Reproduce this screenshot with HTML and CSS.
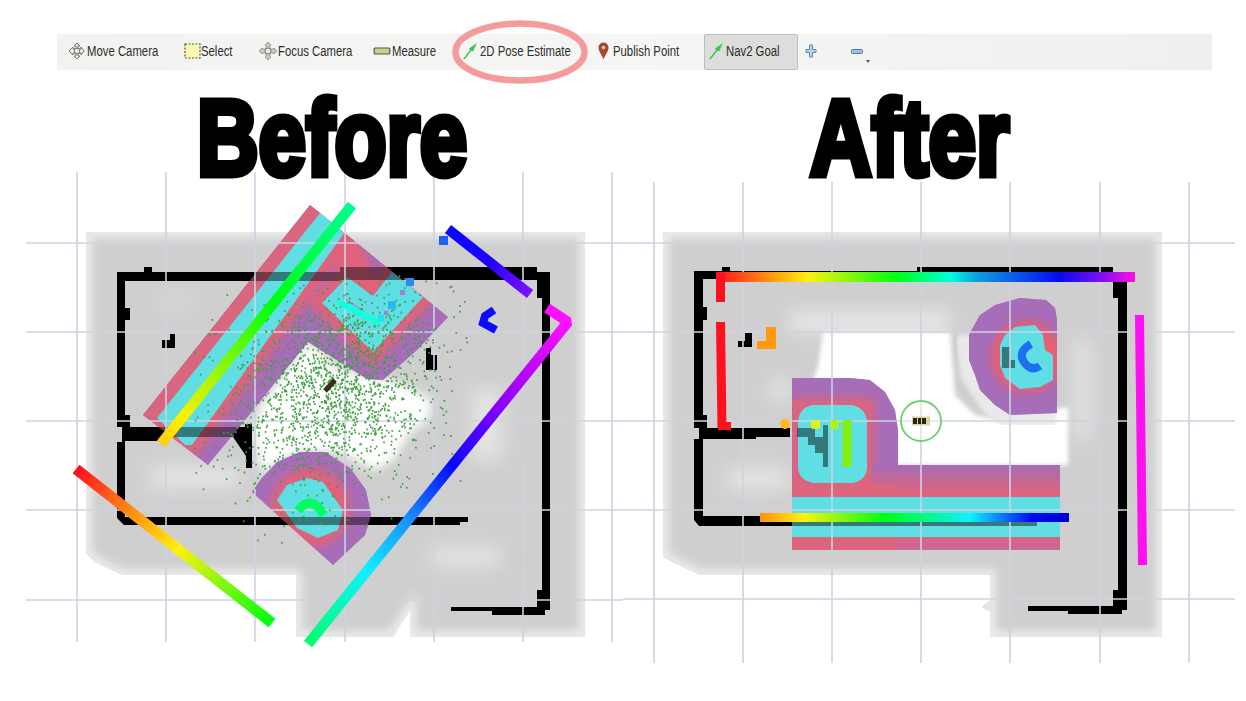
FILE: index.html
```html
<!DOCTYPE html>
<html lang="en">
<head>
<meta charset="utf-8">
<title>2D Pose Estimate: before and after</title>
<link rel="stylesheet" href="styles.css">
</head>
<body>
<main class="page">
  <nav class="toolbar">
    <div class="tool tool-move">
      <svg class="ico" viewBox="0 0 18 18"><path d="M9 1l3 3h-2v3h3V5l3 4-3 4v-2h-3v3h2l-3 3-3-3h2v-3H5v2L1 9l4-4v2h3V4H6z" fill="#e9e9e6" stroke="#77776f" stroke-width="1"/><rect x="6.500" y="6.500" width="5" height="5" fill="none" stroke="#88887f" stroke-width="1"/></svg>
      <span>Move Camera</span>
    </div>
    <div class="tool tool-select">
      <svg class="ico" viewBox="0 0 17 18"><rect x="1" y="2" width="15" height="14" fill="#fbf8b4" stroke="#55553a" stroke-width="1.200" stroke-dasharray="2 1.500"/></svg>
      <span>Select</span>
    </div>
    <div class="tool tool-focus">
      <svg class="ico" viewBox="0 0 18 18"><path d="M9 0l3 3-1 1v3h3l1-1 3 3-3 3-1-1h-3v3l1 1-3 3-3-3 1-1v-3H4l-1 1-3-3 3-3 1 1h3V4L6 3z" fill="#c4c6bf" stroke="#8d8f87" stroke-width=".8"/><circle cx="9" cy="9" r="3" fill="#e8e8e4" stroke="#7c7e76"/></svg>
      <span>Focus Camera</span>
    </div>
    <div class="tool tool-measure">
      <svg class="ico ico-wide" viewBox="0 0 17 8"><rect x=".7" y="1" width="15.600" height="6" rx="1" fill="#c8cf93" stroke="#55584a" stroke-width="1.200"/></svg>
      <span>Measure</span>
    </div>
    <div class="tool tool-pose">
      <svg class="ico" viewBox="0 0 16 18"><path d="M1 17L8 8 7 6.500 15 1l-4 8.500L9.500 8.500 3 17z" fill="#38c94a"/></svg>
      <span>2D Pose Estimate</span>
    </div>
    <div class="tool tool-point">
      <svg class="ico ico-pin" viewBox="0 0 11 18"><path d="M5.500 17.500C4 13 .5 9.500.5 5.500a5 5 0 0 1 10 0c0 4-3.500 7.500-5 12z" fill="#a24a2c"/><circle cx="5.500" cy="5.500" r="1.800" fill="#ecc7b0"/></svg>
      <span>Publish Point</span>
    </div>
    <div class="tool tool-nav">
      <svg class="ico" viewBox="0 0 16 18"><path d="M1 17L8 8 7 6.500 15 1l-4 8.500L9.500 8.500 3 17z" fill="#38c94a"/></svg>
      <span>Nav2 Goal</span>
    </div>
    <svg class="ico-plus" viewBox="0 0 12 14"><path d="M4.500 1h3v4.500H11v3H7.500V13h-3V8.500H1v-3h3.500z" fill="#b7d3ec" stroke="#5f87b4" stroke-width="1"/></svg>
    <div class="minus-wrap">
      <svg class="ico-minus" viewBox="0 0 12 5"><rect x=".5" y=".5" width="11" height="4" rx="1" fill="#9fc0e0" stroke="#4f78a8"/></svg>
      <span class="caret"></span>
    </div>
    <svg class="ring" viewBox="0 0 140 70"><ellipse cx="70" cy="35" rx="64.500" ry="28.500" fill="none" stroke="#f49c9c" stroke-width="6.500"/></svg>
  </nav>

  <header class="titles">
    <h1 class="title title-before">Before</h1>
    <h1 class="title title-after">After</h1>
  </header>

  <section class="maps">
    <svg class="map" viewBox="0 172 623 529" aria-label="Before map">
      <defs>
        <filter id="b2"><feGaussianBlur stdDeviation="2"/></filter>
        <filter id="b5" x="-20%" y="-20%" width="140%" height="140%"><feGaussianBlur stdDeviation="5"/></filter>
        <filter id="b9" x="-30%" y="-30%" width="160%" height="160%"><feGaussianBlur stdDeviation="9"/></filter>
        <clipPath id="lgray"><path d="M86 232H585V637H410V610L393 637H296V575H122L95 562 86 553z"/></clipPath>
        <clipPath id="lz1"><path d="M310 205L448 317 433 333 417 350 383 380 367 379 308 342 245 420 208 465 143 415z"/></clipPath>
        <clipPath id="lz2"><path d="M252 492L262 478 277 462 300 452 325 452 350 468 366 490 371 515 365 535 333 565z"/></clipPath>
        <linearGradient id="la" gradientUnits="userSpaceOnUse" x1="352" y1="207" x2="163" y2="442"><stop offset="0" stop-color="#00ff90"/><stop offset=".42" stop-color="#00ff10"/><stop offset=".9" stop-color="#fff000"/><stop offset="1" stop-color="#ffd010"/></linearGradient>
        <linearGradient id="lb" gradientUnits="userSpaceOnUse" x1="450" y1="231" x2="528" y2="293"><stop offset="0" stop-color="#0808ff"/><stop offset=".5" stop-color="#2000ff"/><stop offset="1" stop-color="#7a10ff"/></linearGradient>
        <linearGradient id="lc" gradientUnits="userSpaceOnUse" x1="570" y1="323" x2="310" y2="642"><stop offset="0" stop-color="#ff10ff"/><stop offset=".28" stop-color="#8000ff"/><stop offset=".45" stop-color="#0808ff"/><stop offset=".62" stop-color="#1a90ff"/><stop offset=".78" stop-color="#10f0ff"/><stop offset="1" stop-color="#00ff70"/></linearGradient>
        <linearGradient id="ld" gradientUnits="userSpaceOnUse" x1="78" y1="470" x2="270" y2="622"><stop offset="0" stop-color="#ff1020"/><stop offset=".28" stop-color="#ff9010"/><stop offset=".52" stop-color="#fff010"/><stop offset="1" stop-color="#00ff10"/></linearGradient>
        <g id="lzones">
          <g clip-path="url(#lz1)">
            <rect x="130" y="200" width="330" height="280" fill="#a66db8"/>
            <g filter="url(#b5)"><path d="M320 213L345 232 347 277 322 303 373 352 423 297 392 272 373 296 345 232 192 445 185 445 157 418z" fill="#e0647a" stroke="#e0647a" stroke-width="20"/></g>
            <path d="M310 205L320 213 157 418 143 415z" fill="#d9677e"/>
            <path d="M320 213L345 232 192 445 185 445 157 418z" fill="#5fdfe3"/>
          </g>
          <path d="M347 277L373 296 392 272 423 297 373 352 322 303z" fill="#5fdfe3"/>
          <path d="M343 297L378 322" stroke="#a78cd0" stroke-width="1.500"/>
          <g clip-path="url(#lz2)">
            <rect x="245" y="445" width="130" height="125" fill="#a66db8"/>
            <g filter="url(#b5)"><circle cx="310" cy="508" r="40" fill="#e0647a"/></g>
          </g>
          <path d="M277 500L287 485 307 478 323 482 343 510 338 530 318 538 297 528z" fill="#5fdfe3"/>
        </g>
      </defs>

      <g clip-path="url(#lgray)">
        <rect x="80" y="225" width="510" height="420" fill="#cfcfcf"/>
        <g filter="url(#b5)">
          <path d="M86 232H585V637H410V610L393 637H296V575H122L95 562 86 553z" fill="none" stroke="#eeeeee" stroke-width="11"/>
        </g>
        <g filter="url(#b9)" fill="#e4e4e4">
          <rect x="150" y="466" width="90" height="22"/>
          <rect x="430" y="548" width="70" height="18"/>
          <rect x="472" y="390" width="30" height="70"/>
          <rect x="160" y="298" width="30" height="6"/>
        </g>
      </g>
      <g filter="url(#b5)"><path d="M308 342L338 370 395 382 432 400 428 420 410 432 393 460 375 470 340 452 300 450 262 472 252 430 262 405z" fill="#fff"/></g>

      <use href="#lzones"/>
      <path fill="#000" d="M117 272H340V267H537V272H550V610H545V615H492V611H451V607H537V590H542V298H537V280H340V281H125V308H130V320H125V415H130V427H245V424H252V468H246V456L233 437H160V441H125V517H468V522H460V525H124L117 518V442H122V427H117zM144 267H152V272H144z"/>
      <path fill="#000" d="M162 340H170V334H175V348H162zM426 348H431V355H437V370H426z"/>
      <use href="#lzones" opacity=".55"/>

      <g class="grid">
        <path d="M77 172V642M166 172V642M255 172V642M345 172V642M434 172V642M523 172V642M612 172V642M26 243H623M26 332H623M26 421H623M26 510H623M26 600H623"/>
      </g>

      <g id="particles"></g>

      <path d="M298 511Q310 493 324 515" fill="none" stroke="#00ff60" stroke-width="9"/>
      <path d="M338 302L380 323" stroke="#10ffdc" stroke-width="6"/>
      <rect x="406" y="278" width="8" height="8" fill="#2a8cf0"/>
      <rect x="388" y="301" width="8" height="8" fill="#2bb8f0"/>
      <rect x="378" y="315" width="6" height="6" fill="#20e0f0"/>
      <rect x="400" y="290" width="5" height="5" fill="#a77fd0"/>
      <rect x="384" y="311" width="4" height="4" fill="#a77fd0"/>
      <rect x="439" y="236" width="9" height="9" fill="#2060f0"/>

      <path d="M352 205L161 444" stroke="url(#la)" stroke-width="10.500"/>
      <path d="M448 229L530 294" stroke="url(#lb)" stroke-width="10"/>
      <path d="M547 308L568 322 308 644" fill="none" stroke="url(#lc)" stroke-width="10.500" stroke-linejoin="bevel"/>
      <path d="M76 469L272 623" stroke="url(#ld)" stroke-width="11"/>
      <path d="M494 310L485 316 483 323 496 330" fill="none" stroke="#0a0aff" stroke-width="8"/>
      <path d="M325 391L335 380" stroke="#3a2e1a" stroke-width="5"/>
    </svg>

    <svg class="map" viewBox="623 172 623 529" aria-label="After map">
      <defs>
        <clipPath id="rgray"><path d="M663 232H1162V637H990V612L982 607 990 600V575H700L672 562 663 557z"/></clipPath>
        <clipPath id="rz1"><path d="M792 378H850L870 380 885 392 895 410 898 430V465H1060V550H792z"/></clipPath>
        <clipPath id="rz2"><path d="M1020 298L1046 300 1055 308 1057 320V413L1010 415 995 405 980 390 975 375 969 360V335L980 315 995 305z"/></clipPath>
        <linearGradient id="ra" gradientUnits="userSpaceOnUse" x1="716" y1="0" x2="1135" y2="0"><stop offset="0" stop-color="#ff1020"/><stop offset=".12" stop-color="#ff8c10"/><stop offset=".22" stop-color="#fff010"/><stop offset=".43" stop-color="#00ff10"/><stop offset=".56" stop-color="#00ffe0"/><stop offset=".62" stop-color="#10a0e0"/><stop offset=".82" stop-color="#0808f0"/><stop offset=".92" stop-color="#8010f0"/><stop offset="1" stop-color="#ff10e0"/></linearGradient>
        <linearGradient id="rb" gradientUnits="userSpaceOnUse" x1="760" y1="0" x2="1069" y2="0"><stop offset="0" stop-color="#ff9010"/><stop offset=".14" stop-color="#fff010"/><stop offset=".4" stop-color="#00ff10"/><stop offset=".68" stop-color="#10f0ff"/><stop offset=".88" stop-color="#0808f0"/><stop offset="1" stop-color="#0000d0"/></linearGradient>
        <linearGradient id="rc" gradientUnits="userSpaceOnUse" x1="0" y1="465" x2="0" y2="550"><stop offset="0" stop-color="#a66db8"/><stop offset=".32" stop-color="#dc647c"/><stop offset=".8" stop-color="#dc647c"/><stop offset="1" stop-color="#c9689a"/></linearGradient>
        <g id="rzones">
          <g clip-path="url(#rz1)">
            <rect x="790" y="375" width="275" height="180" fill="#a66db8"/>
            <g filter="url(#b5)" fill="#e0647a" stroke="#e0647a" stroke-width="14">
              <path d="M797 405H867V483H797z"/>
            </g>
            <rect x="872" y="465" width="188" height="85" fill="url(#rc)"/>
            <rect x="792" y="484" width="106" height="66" fill="#dc647c"/>
          </g>
          <path d="M792 497H1060V537H792z" fill="#5fdfe3"/>
          <path d="M812 405H852Q866 408 867 422V468Q866 480 853 483H813Q799 480 798 468V422Q799 408 812 405z" fill="#5fdfe3"/>
          <g clip-path="url(#rz2)">
            <rect x="960" y="290" width="105" height="130" fill="#a66db8"/>
            <g filter="url(#b5)"><circle cx="1027" cy="357" r="36" fill="#e85f72"/></g>
          </g>
          <path d="M1015 327L1035 325 1043 335 1045 350 1053 355V380L1040 387 1020 389 1005 378 1000 365V345L1005 335z" fill="#5fdfe3"/>
        </g>
      </defs>

      <g clip-path="url(#rgray)">
        <rect x="655" y="225" width="515" height="420" fill="#cfcfcf"/>
        <g filter="url(#b5)">
          <path d="M663 232H1162V637H990V575H700L672 562 663 557z" fill="none" stroke="#eeeeee" stroke-width="11"/>
        </g>
        <g filter="url(#b9)" fill="#e4e4e4">
          <rect x="728" y="468" width="60" height="22"/>
          <rect x="770" y="380" width="20" height="20"/>
          <rect x="1075" y="340" width="15" height="100"/>
          <rect x="790" y="312" width="160" height="20" fill="#e8e8e8"/>
        </g>
      </g>
      <g filter="url(#b2)"><path d="M823 332H950L955 395 975 415 1000 420 1068 407V465H840V380H813L818 367z" fill="#fff"/></g>
      <path d="M966 335L972 375 992 405 1007 416H1056" fill="none" stroke="#e9e9e9" stroke-width="22" filter="url(#b2)"/>
      <use href="#rzones"/>
      <path fill="#000" d="M694 271H722V267H730V271H917V267H1113V278H1127V610H1122V614H1068V611H1028V606H1113V590H1118V298H1113V279H703V307H707V320H703V415H707V428H790V437H756V439H703V516H792V517H1037V526H699L694 520V439H699V428H694zM738 347V341H745V333H752V347z"/>
      <path fill="#000" d="M797 428H815V437H823V425H828V467H823V453H815V445H808V437H797zM1002 347H1010V360H1015V368H1002z"/>
      <use href="#rzones" opacity=".55"/>

      <g class="grid">
        <path d="M654 182V663M743 182V663M832 182V663M921 182V663M1010 182V663M1100 182V663M1189 182V663M623 243H1235M623 332H1235M623 421H1235M623 510H1235M623 599H1235"/>
      </g>

      <path d="M716 277H1135" stroke="url(#ra)" stroke-width="10"/>
      <path d="M720.500 273V302M720.500 322L722 428" stroke="#ff1020" stroke-width="9"/>
      <rect x="718" y="422" width="13" height="8" fill="#ff1020"/>
      <path d="M1139.500 315L1142.500 565" stroke="#ff10f0" stroke-width="9"/>
      <path d="M760 517.500H1069" stroke="url(#rb)" stroke-width="9"/>
      <path d="M757 341H766V327H776V349H757z" fill="#ff9a10"/>
      <circle cx="785" cy="424" r="5" fill="#ffb820"/>
      <rect x="811" y="420" width="9" height="9" rx="2" fill="#e4ee20"/>
      <rect x="830" y="420" width="9" height="9" rx="2" fill="#b0f020"/>
      <path d="M847 420V467" stroke="#80f010" stroke-width="9"/>
      <path d="M1031 344Q1017 352 1024 362T1040 366" fill="none" stroke="#1e6ef0" stroke-width="8"/>

      <circle cx="921" cy="421" r="20" fill="#fff" fill-opacity=".4" stroke="#70cf70" stroke-width="1.800"/>
      <path d="M912 421H930" stroke="#c8b860" stroke-width="9" opacity=".6"/>
      <path d="M913 421H929" stroke="#26241a" stroke-width="6" stroke-dasharray="4 1 3 1 4"/>
    </svg>
  </section>
</main>
<script src="app.js"></script>
</body>
</html>
```

FILE: styles.css
```css
* { box-sizing: border-box; }
html, body { margin: 0; background: #fff; }
.page {
  width: 1246px;
  height: 701px;
  overflow: hidden;
  display: flex;
  flex-direction: column;
  padding-top: 34px;
}
.toolbar {
  position: relative;
  flex: none;
  display: flex;
  align-items: center;
  margin-left: 57px;
  width: 1155px;
  height: 36px;
  padding-left: 11px;
  background: linear-gradient(90deg, #f2f2f0, #f6f6f4 50%, #efefed);
  font-family: "Liberation Sans", sans-serif;
  font-size: 14px;
  color: #2d2d2a;
  filter: blur(.35px);
}
.tool { display: flex; align-items: center; flex: none; height: 36px; white-space: nowrap; }
.tool span { display: block; margin-top: -2px; transform: scaleX(.81); transform-origin: left center; }
.ico { width: 18px; height: 18px; flex: none; margin-right: 1px; margin-top: -2px; }
.ico-wide { height: 8px; }
.ico-pin { width: 11px; margin-right: 4px; }
.tool-move span { width: 73px; }
.tool-select { margin-left: 24px; }
.tool-select .ico { width: 17px; margin-right: 0; }
.tool-select span { width: 34px; }
.tool-focus { margin-left: 24px; }
.tool-focus span { width: 73px; }
.tool-measure { margin-left: 22px; }
.tool-measure span { width: 46px; }
.tool-pose { margin-left: 24px; }
.tool-pose .ico { width: 16px; margin-right: 2px; }
.tool-pose span { width: 92px; }
.tool-point { margin-left: 26px; }
.tool-point span { width: 70px; }
.tool-nav {
  margin-left: 21px;
  width: 94px;
  padding-left: 3px;
  background: #dddddb;
  border: 1px solid #bcbcba;
  border-radius: 2px;
}
.tool-nav .ico { width: 16px; margin-right: 2px; }
.ico-plus { width: 12px; height: 14px; flex: none; margin-left: 7px; margin-top: -2px; }
.minus-wrap { position: relative; margin-left: 34px; width: 12px; height: 5px; flex: none; margin-top: -2px; }
.ico-minus { display: block; width: 12px; height: 5px; }
.caret {
  position: absolute;
  left: 15px;
  top: 11px;
  border-left: 2px solid transparent;
  border-right: 2px solid transparent;
  border-top: 3px solid #555;
}
.ring {
  position: absolute;
  left: 392.500px;
  top: -17px;
  width: 140px;
  height: 70px;
}
.titles {
  position: relative;
  z-index: 1;
  flex: none;
  display: flex;
  height: 102px;
}
.title {
  margin: 0;
  font-family: "Liberation Sans", sans-serif;
  font-weight: 700;
  font-size: 108px;
  line-height: 135px;
  color: #000;
  -webkit-text-stroke: 7px #000;
  white-space: nowrap;
  transform: scaleX(.79);
  transform-origin: left center;
}
.title-before { margin-left: 197px; width: 271px; }
.title-after { margin-left: 342px; width: 198px; }
.maps { flex: none; display: flex; height: 529px; }
.map { display: block; width: 623px; height: 529px; flex: none; filter: blur(.4px); }
.grid path { fill: none; stroke: #cdd3e3; stroke-width: 1.600; }
.dot { fill: #3f9f42; }
```

FILE: app.js
```js
(function () {
  var seed = 20240611;
  function rnd() {
    seed = (seed * 1664525 + 1013904223) >>> 0;
    return seed / 4294967296;
  }
  function gauss() {
    return Math.sqrt(-2 * Math.log(rnd() + 1e-9)) * Math.cos(2 * Math.PI * rnd());
  }
  var ns = "http://www.w3.org/2000/svg";
  var group = document.getElementById("particles");
  for (var i = 0; i < 1900; i++) {
    var u = gauss() * 58;
    var v = gauss() * 46;
    var x = 335 + u * 0.78 + v * 0.62;
    var y = 385 - u * 0.62 + v * 0.78;
    if (x < 190 || x > 470 || y < 275 || y > 545) continue;
    var r = document.createElementNS(ns, "rect");
    r.setAttribute("x", x.toFixed(1));
    r.setAttribute("y", y.toFixed(1));
    r.setAttribute("width", "1.6");
    r.setAttribute("height", "1.8");
    r.setAttribute("class", "dot");
    group.appendChild(r);
  }
})();
```
